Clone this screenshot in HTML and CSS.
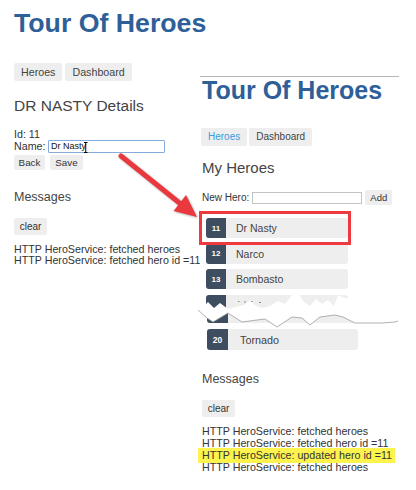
FILE: index.html
```html
<!DOCTYPE html>
<html lang="en">
<head>
<meta charset="utf-8">
<title>Tour Of Heroes</title>
<link rel="stylesheet" href="styles.css">
</head>
<body>
<div class="canvas">
  <section class="shot shot-left">
    <h1 class="title title-left">Tour Of Heroes</h1>
    <nav class="nav nav-left">
      <a class="nav-btn">Heroes</a>
      <a class="nav-btn">Dashboard</a>
    </nav>
    <h2 class="detail-title">DR NASTY Details</h2>
    <div class="field field-id">Id: 11</div>
    <div class="field name-row"><label class="name-label" for="hero-name">Name:</label><input id="hero-name" class="name-input" value="Dr Nasty"></div>
    <div class="actions"><button class="btn btn-back">Back</button><button class="btn btn-save">Save</button></div>
    <h2 class="msg-title msg-title-left">Messages</h2>
    <button class="btn btn-clear">clear</button>
    <div class="msg-list msg-list-left">
      <div class="msg">HTTP HeroService: fetched heroes</div>
      <div class="msg">HTTP HeroService: fetched hero id =11</div>
    </div>
  </section>

  <section class="shot shot-right">
    <h1 class="title title-right">Tour Of Heroes</h1>
    <nav class="nav nav-right">
      <a class="nav-btn nav-btn-sm is-active">Heroes</a>
      <a class="nav-btn nav-btn-sm">Dashboard</a>
    </nav>
    <h2 class="list-title">My Heroes</h2>
    <div class="add-row">
      <label class="add-label" for="new-hero">New Hero:</label>
      <input id="new-hero" class="add-input">
      <button class="btn btn-add">Add</button>
    </div>
    <ul class="heroes">
      <li class="hero"><span class="badge">11</span><span class="hero-name">Dr Nasty</span></li>
      <li class="hero"><span class="badge">12</span><span class="hero-name">Narco</span></li>
      <li class="hero"><span class="badge">13</span><span class="hero-name">Bombasto</span></li>
      <li class="tear">
        <div class="hero"><span class="badge"></span></div>
        <div class="tear-lower"><div class="hero hero-big"><span class="badge"></span></div></div>
      </li>
      <li class="hero hero-big"><span class="badge">20</span><span class="hero-name">Tornado</span></li>
    </ul>
    <h2 class="msg-title">Messages</h2>
    <button class="btn btn-clear">clear</button>
    <div class="msg-list">
      <div class="msg">HTTP HeroService: fetched heroes</div>
      <div class="msg">HTTP HeroService: fetched hero id =11</div>
      <div class="msg msg-highlight">HTTP HeroService: updated hero id =11</div>
      <div class="msg">HTTP HeroService: fetched heroes</div>
    </div>
  </section>

  <svg class="annotations" width="416" height="490" viewBox="0 0 416 490" aria-hidden="true">
    <polygon class="tear-mask" points="196,304 200,300 204,306 208,302 214,308 220,303 228,309 236,307 244,305 250,300 256,306 262,308 270,306 278,301 285,304 292,295 298,293 304,302 310,306 316,299 322,304 328,300 334,306 338,295 345,298 360,300 400,300 400,321 398,321 395,322 382,323 372,323 355,323 343,317 335,315 320,317 310,325 302,318 292,317 277,327 265,319 257,320 242,322 228,313 213,322 207,318 198,310 196,310"/>
    <polyline class="tear-edge" points="198,310 207,318 213,322 228,313 242,322 257,320 265,319 277,327 292,317 302,318 310,325 320,317 335,315 343,317 355,323 372,323 382,323 395,322 398,321"/>
    <g class="tear-dots">
      <rect x="238" y="301" width="1.5" height="1" />
      <rect x="244" y="301.5" width="2" height="1" />
      <rect x="251" y="301" width="1.5" height="1" />
      <rect x="259" y="302" width="2" height="1" />
    </g>
    <rect class="callout" x="200.5" y="212.5" width="149" height="31"/>
    <g class="arrow">
      <line x1="121" y1="156" x2="182" y2="205"/>
      <polygon points="197,217 186,195 173.5,211"/>
    </g>
    <path class="ibeam" d="M84 142.5h3.5M85.75 142.5v10M84 152.5h3.5"/>
  </svg>
</div>
</body>
</html>
```

FILE: styles.css
```css
* { box-sizing: border-box; }
html, body { margin: 0; padding: 0; background: #fff; }
body { font-family: "Liberation Sans", Arial, sans-serif; color: #333; }

.canvas { position: relative; width: 416px; height: 490px; overflow: hidden; background: #fff; }

.shot { background: #fff; }
.shot-left { position: absolute; left: 0; top: 0; width: 416px; padding: 7.5px 0 0 14px; }
.shot-right { position: absolute; left: 200px; top: 76px; width: 199px; height: 414px; border-top: 1px solid #b5b5b5; padding-left: 2px; }

.title { margin: 0; font-weight: bold; color: #2f5f98; white-space: nowrap; }
.title-left { font-size: 26.7px; line-height: 30px; }
.title-right { font-size: 25px; line-height: 26px; }

.nav { display: flex; }
.nav-left { margin-top: 25.5px; gap: 3px; }
.nav-right { margin-top: 25px; margin-left: -1px; gap: 2px; }
.nav-btn { display: block; height: 18px; line-height: 18px; padding: 0 7px; background: #eee; border-radius: 2px; color: #444; font-size: 10.7px; white-space: nowrap; }
.nav-btn-sm { font-size: 10px; }
.nav-btn.is-active { color: #3d9be2; }

.detail-title { margin: 15.7px 0 0; font-size: 15.5px; line-height: 18px; font-weight: normal; color: #444; white-space: nowrap; }
.field { font-size: 10.7px; line-height: 12px; color: #333; }
.field-id { margin-top: 13.3px; }
.name-row { display: flex; align-items: center; height: 13px; gap: 2.5px; }
.name-input { width: 117px; height: 13px; margin: 0; padding: 0 2px; border: 1px solid #86acdd; border-radius: 1px; font-family: "Liberation Sans", Arial, sans-serif; font-size: 9px; color: #111; background: #fff; outline: none; }

.btn { display: block; margin: 0; border: none; border-radius: 2px; background: #eee; color: #333; font-family: "Liberation Sans", Arial, sans-serif; padding: 0; cursor: default; }
.actions { display: flex; gap: 5px; margin-top: 2px; }
.btn-back { width: 31px; height: 15px; font-size: 9.8px; }
.btn-save { width: 33px; height: 15px; font-size: 9.8px; }
.btn-clear { width: 33px; height: 17px; font-size: 10px; margin-top: 12.9px; }
.btn-add { width: 27px; height: 15px; font-size: 9.5px; margin-left: 3px; }

.msg-title { margin: 22px 0 0; font-size: 12.5px; line-height: 15px; font-weight: normal; color: #444; }
.msg-title-left { margin-top: 20.1px; }
.msg-list { margin-top: 8px; }
.msg-list-left { margin-top: 8.7px; }
.msg-list-left .msg { line-height: 11px; }
.msg { font-size: 10.7px; line-height: 12px; color: #333; white-space: nowrap; }
.msg-highlight { width: fit-content; margin: -1px 0 -2px -4px; padding: 1px 3px 2px 4px; background: #fcf34e; }

.list-title { margin: 13px 0 0; font-size: 15px; line-height: 17px; font-weight: normal; color: #444; }
.add-row { display: flex; align-items: center; height: 15px; margin-top: 14px; }
.add-label { font-size: 10px; line-height: 12px; color: #333; white-space: nowrap; }
.add-input { width: 110px; height: 12px; margin: 0 0 0 3px; padding: 0; border: 1px solid #c4c4c4; background: #fff; outline: none; }

.heroes { list-style: none; margin: 13px 0 0 4px; padding: 0; display: flex; flex-direction: column; gap: 5.5px; }
.hero { display: flex; align-items: center; width: 142px; height: 20px; background: #eee; border-radius: 3px; }
.badge { display: flex; align-items: center; justify-content: center; align-self: stretch; width: 20px; background: #3f4d60; color: #fff; font-size: 8px; font-weight: bold; border-radius: 3px 0 0 3px; }
.hero-name { margin-left: 10px; font-size: 10.5px; color: #444; white-space: nowrap; }
.hero-big { width: 151px; height: 21px; margin-left: 1px; }
.hero-big .badge { width: 21px; font-size: 8.5px; }
.hero-big .hero-name { margin-left: 12px; font-size: 10.8px; }

.tear { height: 29px; overflow: hidden; display: flex; flex-direction: column; }
.tear .hero { flex: none; }
.tear-lower { height: 10px; margin-top: -1.5px; overflow: hidden; display: flex; align-items: flex-end; flex: none; }

.annotations { position: absolute; left: 0; top: 0; pointer-events: none; }
.tear-mask { fill: #fff; }
.tear-edge { fill: none; stroke: #9c9c9c; stroke-width: 0.8; }
.tear-dots rect { fill: #8a8a8a; }
.callout { fill: none; stroke: #ee3a3f; stroke-width: 3; }
.arrow { filter: drop-shadow(1px 1.5px 1px rgba(0, 0, 0, 0.3)); }
.arrow line { stroke: #e9393e; stroke-width: 5; stroke-linecap: round; }
.arrow polygon { fill: #e9393e; }
.ibeam { fill: none; stroke: #000; stroke-width: 1; }
```
